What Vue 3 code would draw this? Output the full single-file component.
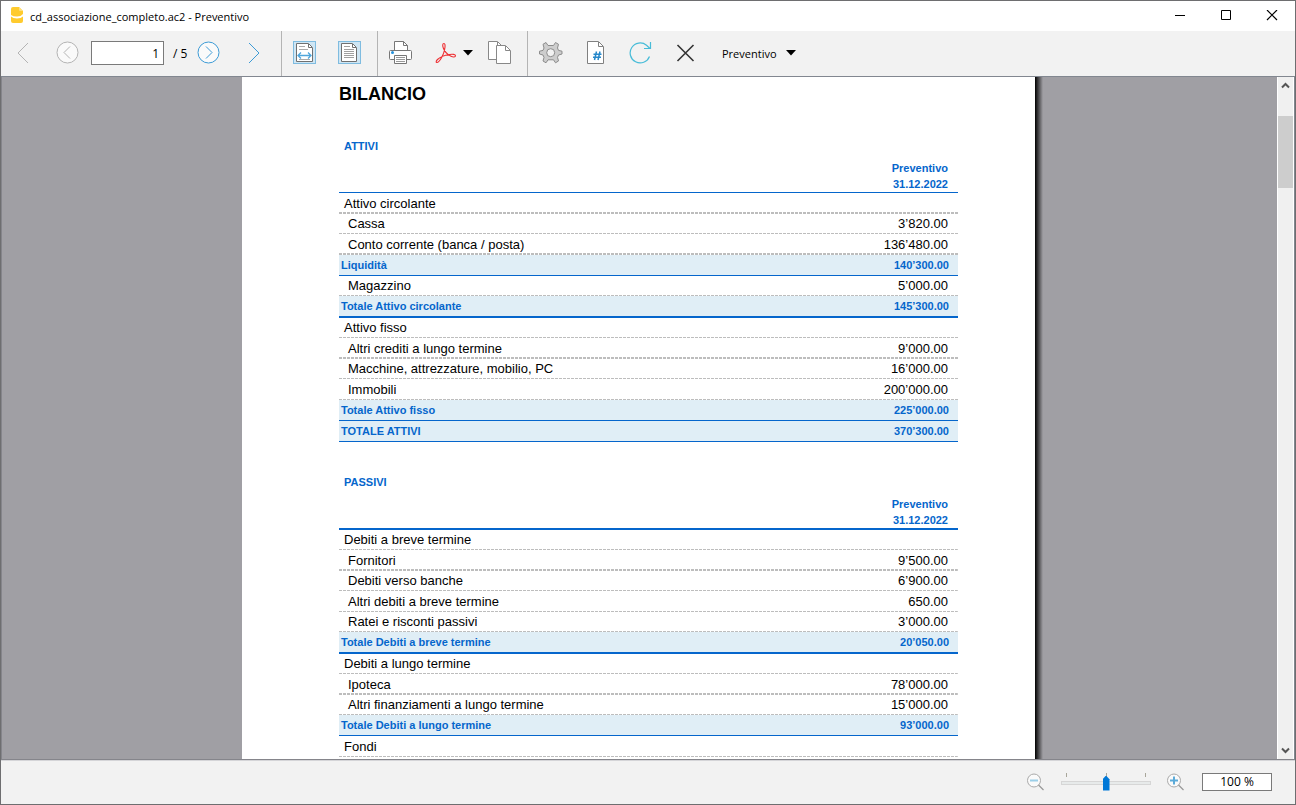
<script setup>
import { ref } from 'vue'

const page = ref('1')
const zoomText = ref('100 %')
const zoom = ref(50)

// kind: group | item | total; size: s (20px), m (21px), l (22px); rule: thin | thick
const sections = [
  {
    title: 'ATTIVI',
    headRule: 'thin',
    rows: [
      { kind: 'group', label: 'Attivo circolante', value: '', size: 'm', rule: 'thick' },
      { kind: 'item', label: 'Cassa', value: '3’820.00', size: 's', rule: 'thin' },
      { kind: 'item', label: 'Conto corrente (banca / posta)', value: '136’480.00', size: 'm', rule: 'thick' },
      { kind: 'total', label: 'Liquidità', value: '140’300.00', size: 'm', rule: 'thin' },
      { kind: 'item', label: 'Magazzino', value: '5’000.00', size: 's', rule: 'thin' },
      { kind: 'total', label: 'Totale Attivo circolante', value: '145’300.00', size: 'l', rule: 'thick' },
      { kind: 'group', label: 'Attivo fisso', value: '', size: 's', rule: 'thin' },
      { kind: 'item', label: 'Altri crediti a lungo termine', value: '9’000.00', size: 'm', rule: 'thick' },
      { kind: 'item', label: 'Macchine, attrezzature, mobilio, PC', value: '16’000.00', size: 's', rule: 'thin' },
      { kind: 'item', label: 'Immobili', value: '200’000.00', size: 'm', rule: 'thin' },
      { kind: 'total', label: 'Totale Attivo fisso', value: '225’000.00', size: 'm', rule: 'thin' },
      { kind: 'total', label: 'TOTALE ATTIVI', value: '370’300.00', size: 'm', rule: 'thin' },
    ],
  },
  {
    title: 'PASSIVI',
    headRule: 'thick',
    rows: [
      { kind: 'group', label: 'Debiti a breve termine', value: '', size: 's', rule: 'thin' },
      { kind: 'item', label: 'Fornitori', value: '9’500.00', size: 'm', rule: 'thick' },
      { kind: 'item', label: 'Debiti verso banche', value: '6’900.00', size: 's', rule: 'thin' },
      { kind: 'item', label: 'Altri debiti a breve termine', value: '650.00', size: 'm', rule: 'thin' },
      { kind: 'item', label: 'Ratei e risconti passivi', value: '3’000.00', size: 's', rule: 'thin' },
      { kind: 'total', label: 'Totale Debiti a breve termine', value: '20’050.00', size: 'l', rule: 'thick' },
      { kind: 'group', label: 'Debiti a lungo termine', value: '', size: 's', rule: 'thin' },
      { kind: 'item', label: 'Ipoteca', value: '78’000.00', size: 'm', rule: 'thick' },
      { kind: 'item', label: 'Altri finanziamenti a lungo termine', value: '15’000.00', size: 's', rule: 'thin' },
      { kind: 'total', label: 'Totale Debiti a lungo termine', value: '93’000.00', size: 'm', rule: 'thin' },
      { kind: 'group', label: 'Fondi', value: '', size: 'm', rule: 'thin' },
    ],
  },
]
</script>

<template>
  <div class="window">
    <header class="titlebar">
      <svg class="app-icon" width="14" height="18" viewBox="0 0 14 18">
        <path d="M1 2Q1 0 3 0H9L13 4V7Q11 9.500 7 9.500Q3 9.500 1 8Z" fill="#ffcb2e" />
        <path d="M9 0L13 4H10Q9 4 9 3Z" fill="#ffe07a" />
        <path d="M1 9.500Q3 11.500 7 11.500Q11 11.500 13 9.500V14Q13 16 11 16H3Q1 16 1 14Z" fill="#ffcb2e" />
      </svg>
      <span class="window-title">cd_associazione_completo.ac2 - Preventivo</span>
      <div class="window-buttons">
        <button aria-label="Riduci a icona">
          <svg width="12" height="12" viewBox="0 0 12 12"><path d="M1 5.500H11" stroke="#000" /></svg>
        </button>
        <button aria-label="Ingrandisci">
          <svg width="12" height="12" viewBox="0 0 12 12"><path d="M1.500 0.500H10.500V9.500H1.500Z" fill="none" stroke="#000" /></svg>
        </button>
        <button aria-label="Chiudi">
          <svg width="12" height="12" viewBox="0 0 12 12"><path d="M1 0L11 10M11 0L1 10" stroke="#000" stroke-width="1.200" /></svg>
        </button>
      </div>
    </header>

    <nav class="toolbar">
      <button class="tool nav" aria-label="Prima pagina">
        <svg width="24" height="24" viewBox="0 0 24 24"><path d="M17 2L7 12L17 22" fill="none" stroke="#b4b4b4" /></svg>
      </button>
      <button class="tool nav" aria-label="Pagina precedente">
        <svg width="24" height="24" viewBox="0 0 24 24" fill="none" stroke="#b4b4b4"><circle cx="12.500" cy="11.500" r="10.500" fill="#fafafa" /><path d="M15 5.500L9 11.500L15 17.500" /></svg>
      </button>
      <input id="page" v-model="page" class="page-input" type="text" />
      <label for="page" class="page-total">/ 5</label>
      <button class="tool nav" aria-label="Pagina successiva">
        <svg width="24" height="24" viewBox="0 0 24 24" fill="none" stroke="#3d9bd6"><circle cx="12.500" cy="11.500" r="10.500" fill="#fafafa" /><path d="M10 5.500L16 11.500L10 17.500" /></svg>
      </button>
      <button class="tool nav last" aria-label="Ultima pagina">
        <svg width="24" height="24" viewBox="0 0 24 24"><path d="M7 2L17 12L7 22" fill="none" stroke="#3d9bd6" /></svg>
      </button>
      <span class="sep"></span>
      <button class="tool" aria-label="Adatta alla larghezza">
        <svg width="24" height="24" viewBox="0 0 24 24">
          <rect x="0.500" y="0.500" width="22" height="22" fill="#cfe6f4" stroke="#7fbce0" />
          <path d="M3.500 2.500H15.500L19.500 6.500V20.500H3.500Z" fill="#fff" stroke="#707070" />
          <path d="M15.500 3V6.500H19" fill="none" stroke="#707070" />
          <path d="M6 5.500H12M6 8.500H15M6 18.500H17" stroke="#aaa" />
          <path d="M5 14.500H18M8 11.500L5 14.500L8 17.500M15 11.500L18 14.500L15 17.500" fill="none" stroke="#4fa6dc" stroke-width="1.300" />
        </svg>
      </button>
      <button class="tool" aria-label="Adatta alla pagina">
        <svg width="24" height="24" viewBox="0 0 24 24">
          <rect x="0.500" y="0.500" width="22" height="22" fill="#cfe6f4" stroke="#7fbce0" />
          <path d="M3.500 2.500H14.500L18.500 6.500V20.500H3.500Z" fill="#fff" stroke="#707070" />
          <path d="M14.500 3V6.500H18" fill="none" stroke="#707070" />
          <path d="M6 5.500H12M6 8.500H16M6 10.500H16M6 12.500H16M6 14.500H16M6 16.500H16" stroke="#a0a0a0" />
        </svg>
      </button>
      <span class="sep"></span>
      <button class="tool" aria-label="Stampa">
        <svg width="24" height="24" viewBox="0 0 24 24" fill="#fff" stroke="#777">
          <path d="M5.500 9.500V0.500H14.500L18.500 4.500V9.500Z" />
          <path d="M14.500 0.500V4.500H18.500" fill="none" />
          <rect x="0.500" y="9.500" width="22" height="9" rx="1" />
          <path d="M5.500 14.500H17.500V22.500H5.500Z" />
          <path d="M7 16.500H16M7 18.500H16M7 20.500H16" stroke="#999" />
          <circle cx="3.500" cy="11.500" r="1.500" fill="#2492dc" stroke="none" />
        </svg>
      </button>
      <button class="tool pdf" aria-label="Esporta PDF">
        <svg width="22" height="22" viewBox="0 0 22 22" fill="none" stroke="#ee3034" stroke-width="1.100">
          <path d="M9 1.500C7.200 1.500 7.600 4 8.300 6C9.500 9.500 12.500 12.500 16 14.300C18 15.300 20.500 15.300 20.500 13.800C20.500 12.300 17.500 12 14.500 12.500C10 13.200 5 15 2.500 17.500C0.800 19.200 0.800 20.700 2.200 20.500C4 20.200 7 15 8.500 11.500C9.800 8 11 1.500 9 1.500Z" />
        </svg>
        <svg class="arrow" width="12" height="6" viewBox="0 0 12 6"><path d="M1 0H11L6 5.500Z" /></svg>
      </button>
      <button class="tool" aria-label="Copia">
        <svg width="24" height="24" viewBox="0 0 24 24" fill="#fff" stroke="#888">
          <path d="M0.500 0.500H9.500L14.500 5.500V18.500H0.500Z" />
          <path d="M9.500 1V5.500H14" fill="none" />
          <path d="M8.500 4.500H17.500L22.500 9.500V22.500H8.500Z" />
          <path d="M17.500 5V9.500H22" fill="none" />
        </svg>
      </button>
      <span class="sep"></span>
      <button class="tool" aria-label="Impostazioni">
        <svg width="24" height="24" viewBox="0 0 24 24" fill="#cdcdcd" stroke="#8c8c8c">
          <path d="M9 4.500L7 1.500L4 3.300L5 7L4 9.400L0.500 10.200V13L4 14L5 16.400L4 20L7 21.800L9 18.800H14.500L16.500 21.800L19.500 20L18.500 16.400L19.500 14L23 13V10.200L19.500 9.400L18.500 7L19.500 3.300L16.500 1.500L14.500 4.500Z" />
          <circle cx="11.700" cy="11.700" r="4" fill="#f2f2f2" />
        </svg>
      </button>
      <button class="tool" aria-label="Numero di pagina">
        <svg width="24" height="24" viewBox="0 0 24 24" fill="none">
          <path d="M3.500 0.500H14.500L19.500 5.500V22.500H3.500Z" fill="#fff" stroke="#808080" />
          <path d="M14.500 1V5.500H19" stroke="#808080" />
          <path d="M12.500 10.500L10.500 19M16 10.500L14 19M9.500 13.200H17.500M9 16.200H17" stroke="#2688ca" stroke-width="1.500" />
        </svg>
      </button>
      <button class="tool" aria-label="Aggiorna">
        <svg width="24" height="24" viewBox="0 0 24 24" fill="none" stroke="#48bcd8" stroke-width="1.200">
          <path d="M20.500 15.500A10 10 0 1 1 17.500 4.200L21 7.500" />
          <path d="M21.500 1V7.500H15" />
        </svg>
      </button>
      <button class="tool" aria-label="Chiudi anteprima">
        <svg width="24" height="24" viewBox="0 0 24 24"><path d="M3.500 4L19.500 20M19.500 4L3.500 20" stroke="#333" stroke-width="1.600" /></svg>
      </button>
      <button class="menu-button">
        Preventivo
        <svg class="arrow" width="12" height="6" viewBox="0 0 12 6"><path d="M1 0H11L6 5.500Z" /></svg>
      </button>
    </nav>

    <main class="viewer">
      <div class="canvas">
        <article class="sheet">
          <h1>BILANCIO</h1>
          <section v-for="s in sections" :key="s.title">
            <h2>{{ s.title }}</h2>
            <table>
              <thead>
                <tr :class="s.headRule">
                  <td></td>
                  <th scope="col">Preventivo<br />31.12.2022</th>
                </tr>
              </thead>
              <tbody>
                <tr v-for="r in s.rows" :key="r.label" :class="[r.kind, r.size, r.rule]">
                  <td>{{ r.label }}</td>
                  <td class="amount">{{ r.value }}</td>
                </tr>
              </tbody>
            </table>
          </section>
        </article>
      </div>
      <div class="scrollbar">
        <button aria-label="Scorri su">
          <svg width="9" height="7" viewBox="0 0 9 7"><path d="M1 5.500L4.500 2L8 5.500" fill="none" stroke="#555" stroke-width="2" /></svg>
        </button>
        <div class="track"><div class="thumb"></div></div>
        <button aria-label="Scorri giù">
          <svg width="9" height="7" viewBox="0 0 9 7"><path d="M1 1.500L4.500 5L8 1.500" fill="none" stroke="#555" stroke-width="2" /></svg>
        </button>
      </div>
    </main>

    <footer class="statusbar">
      <button class="zoom-button" aria-label="Riduci zoom">
        <svg width="18" height="18" viewBox="0 0 18 18" fill="none">
          <circle cx="7" cy="7.500" r="6.500" fill="#fafafa" stroke="#aaa" />
          <path d="M11.500 12L16.500 17" stroke="#999" stroke-width="1.300" />
          <path d="M3 7.500H11" stroke="#9ccfe8" stroke-width="2" />
        </svg>
      </button>
      <input v-model="zoom" class="slider" type="range" min="0" max="100" aria-label="Zoom" />
      <button class="zoom-button" aria-label="Aumenta zoom">
        <svg width="18" height="18" viewBox="0 0 18 18" fill="none">
          <circle cx="7" cy="7.500" r="6.500" fill="#fafafa" stroke="#aaa" />
          <path d="M11.500 12L16.500 17" stroke="#999" stroke-width="1.300" />
          <path d="M3 7.500H11M7 3.500V11.500" stroke="#5cabd9" stroke-width="2" />
        </svg>
      </button>
      <input v-model="zoomText" class="zoom-value" type="text" aria-label="Percentuale zoom" />
    </footer>
  </div>
</template>

<style>
body {
  margin: 0;
}
</style>

<style scoped>
.window {
  box-sizing: border-box;
  display: flex;
  flex-direction: column;
  height: 100vh;
  border: 1px solid #6e6e70;
  background: #f2f2f2;
  color: #000;
  font-family: 'Open Sans', 'Noto Sans', sans-serif;
  font-size: 11px;
}
button {
  display: flex;
  align-items: center;
  justify-content: center;
  padding: 0;
  border: 0;
  background: none;
  color: inherit;
  font: inherit;
}
input {
  box-sizing: border-box;
  margin: 0;
  font: inherit;
}
svg {
  flex: none;
}

.titlebar {
  display: flex;
  align-items: center;
  flex: none;
  height: 30px;
  padding-left: 9px;
  background: #fff;
}
.window-title {
  margin-left: 6px;
}
.window-buttons {
  display: flex;
  align-self: stretch;
  margin-left: auto;
}
.window-buttons button {
  width: 46px;
}

.toolbar {
  display: flex;
  align-items: center;
  flex: none;
  height: 45px;
  border-bottom: 1px solid #828790;
}
.tool {
  flex: none;
  width: 45px;
  height: 45px;
  padding: 0 0 1px 1px;
}
.nav {
  width: 44px;
  padding-left: 0;
}
.nav.last {
  margin-left: 2px;
}
.page-input {
  width: 73px;
  height: 24px;
  margin: 0 0 1px 2px;
  padding: 0 4px;
  border: 1px solid #7a7a7a;
  background: #fff;
  font-size: 12px;
  text-align: right;
}
.page-total {
  width: 13px;
  margin-left: 9px;
  font-size: 12px;
  white-space: nowrap;
}
.sep {
  align-self: stretch;
  width: 1px;
  margin-left: 5px;
  background: #b4b4b4;
}
.tool.pdf {
  width: 54px;
  padding-left: 9px;
}
.pdf .arrow {
  margin-left: 5px;
}
.menu-button {
  gap: 8px;
  height: 45px;
  padding-left: 14px;
}
.menu-button .arrow {
  margin-bottom: 2px;
}

.viewer {
  display: flex;
  flex: 1;
  min-height: 0;
  border-right: 1px solid #828790;
  border-bottom: 1px solid #85858b;
  border-left: 1px solid #85858b;
  background: #a09fa4;
}
.canvas {
  display: flex;
  flex: 1;
  justify-content: center;
  padding-left: 6px;
  overflow: hidden;
}
.sheet {
  box-sizing: border-box;
  width: 801px;
  padding: 0 85px 0 97px;
  background: linear-gradient(to left, #a09fa4, #000 8px, #fff 8px);
  font-family: 'Liberation Sans', Arial, sans-serif;
}
h1 {
  margin: 0 0 35px;
  padding-top: 6px;
  font-size: 18px;
  line-height: 22px;
}
h2 {
  margin: 0;
  padding-left: 5px;
  color: #0566cc;
  font-size: 11px;
  line-height: 13px;
}
section + section {
  margin-top: 34px;
}
table {
  width: 100%;
  border-spacing: 0;
  font-size: 13px;
  line-height: 15px;
}
td,
th {
  box-sizing: border-box;
  padding: 0 0 3px;
  vertical-align: bottom;
}
th,
.amount {
  padding-right: 10px;
  text-align: right;
}
th {
  padding-bottom: 0;
  color: #0566cc;
  font-size: 11px;
  line-height: 16px;
}
thead tr > * {
  height: 40px;
  border-bottom: 1px solid #0566cc;
}
thead .thick > * {
  height: 41px;
  border-bottom-width: 2px;
}
tbody .s td {
  height: 20px;
}
tbody .m td {
  height: 21px;
}
tbody .l td {
  height: 22px;
}
.group,
.item {
  background: repeating-linear-gradient(to right, #bdbdbd 0 3px, #fff 3px 4px) bottom / 100% 1px no-repeat;
}
.group.thick,
.item.thick {
  background-size: 100% 2px;
}
.group td:first-child {
  padding-left: 5px;
}
.item td:first-child {
  padding-left: 9px;
}
.total td {
  padding-bottom: 2px;
  border-bottom: 1px solid #0566cc;
  background: #e0eef6;
  color: #0566cc;
  font-size: 11px;
  font-weight: bold;
}
.total.thick td {
  border-bottom-width: 2px;
}
.total td:first-child {
  padding-left: 2px;
}
.total .amount {
  padding-right: 9px;
}

.scrollbar {
  display: flex;
  flex-direction: column;
  width: 15px;
  border-right: 1px solid #fff;
  border-left: 1px solid #fff;
  background: #f0f0f0;
}
.scrollbar button {
  width: 15px;
  height: 17px;
}
.track {
  flex: 1;
  padding-top: 22px;
}
.thumb {
  height: 72px;
  background: #cdcdcd;
}

.statusbar {
  display: flex;
  align-items: center;
  justify-content: flex-end;
  flex: none;
  box-sizing: border-box;
  height: 44px;
  padding: 0 23px 2px 0;
  border-top: 1px solid #d5d5d8;
}
.slider {
  appearance: none;
  width: 90px;
  height: 20px;
  margin: 0 16px;
  background:
    linear-gradient(#a8a69a, #a8a69a) 5px 1px / 1px 4px no-repeat,
    linear-gradient(#a8a69a, #a8a69a) 45px 1px / 1px 4px no-repeat,
    linear-gradient(#a8a69a, #a8a69a) 84px 1px / 1px 4px no-repeat;
}
.slider::-webkit-slider-runnable-track {
  box-sizing: border-box;
  height: 4px;
  margin-top: 2px;
  border: 1px solid #d6d6d6;
  background: #e7eaea;
}
.slider::-webkit-slider-thumb {
  appearance: none;
  width: 7px;
  height: 15px;
  margin-top: -6px;
  background: #0078d7;
  clip-path: polygon(50% 0, 100% 25%, 100% 100%, 0 100%, 0 25%);
}
.zoom-value {
  width: 70px;
  height: 18px;
  margin-left: 17px;
  padding: 0;
  border: 1px solid #7a7a7a;
  background: #fff;
  font-size: 12px;
  text-align: center;
}
</style>
